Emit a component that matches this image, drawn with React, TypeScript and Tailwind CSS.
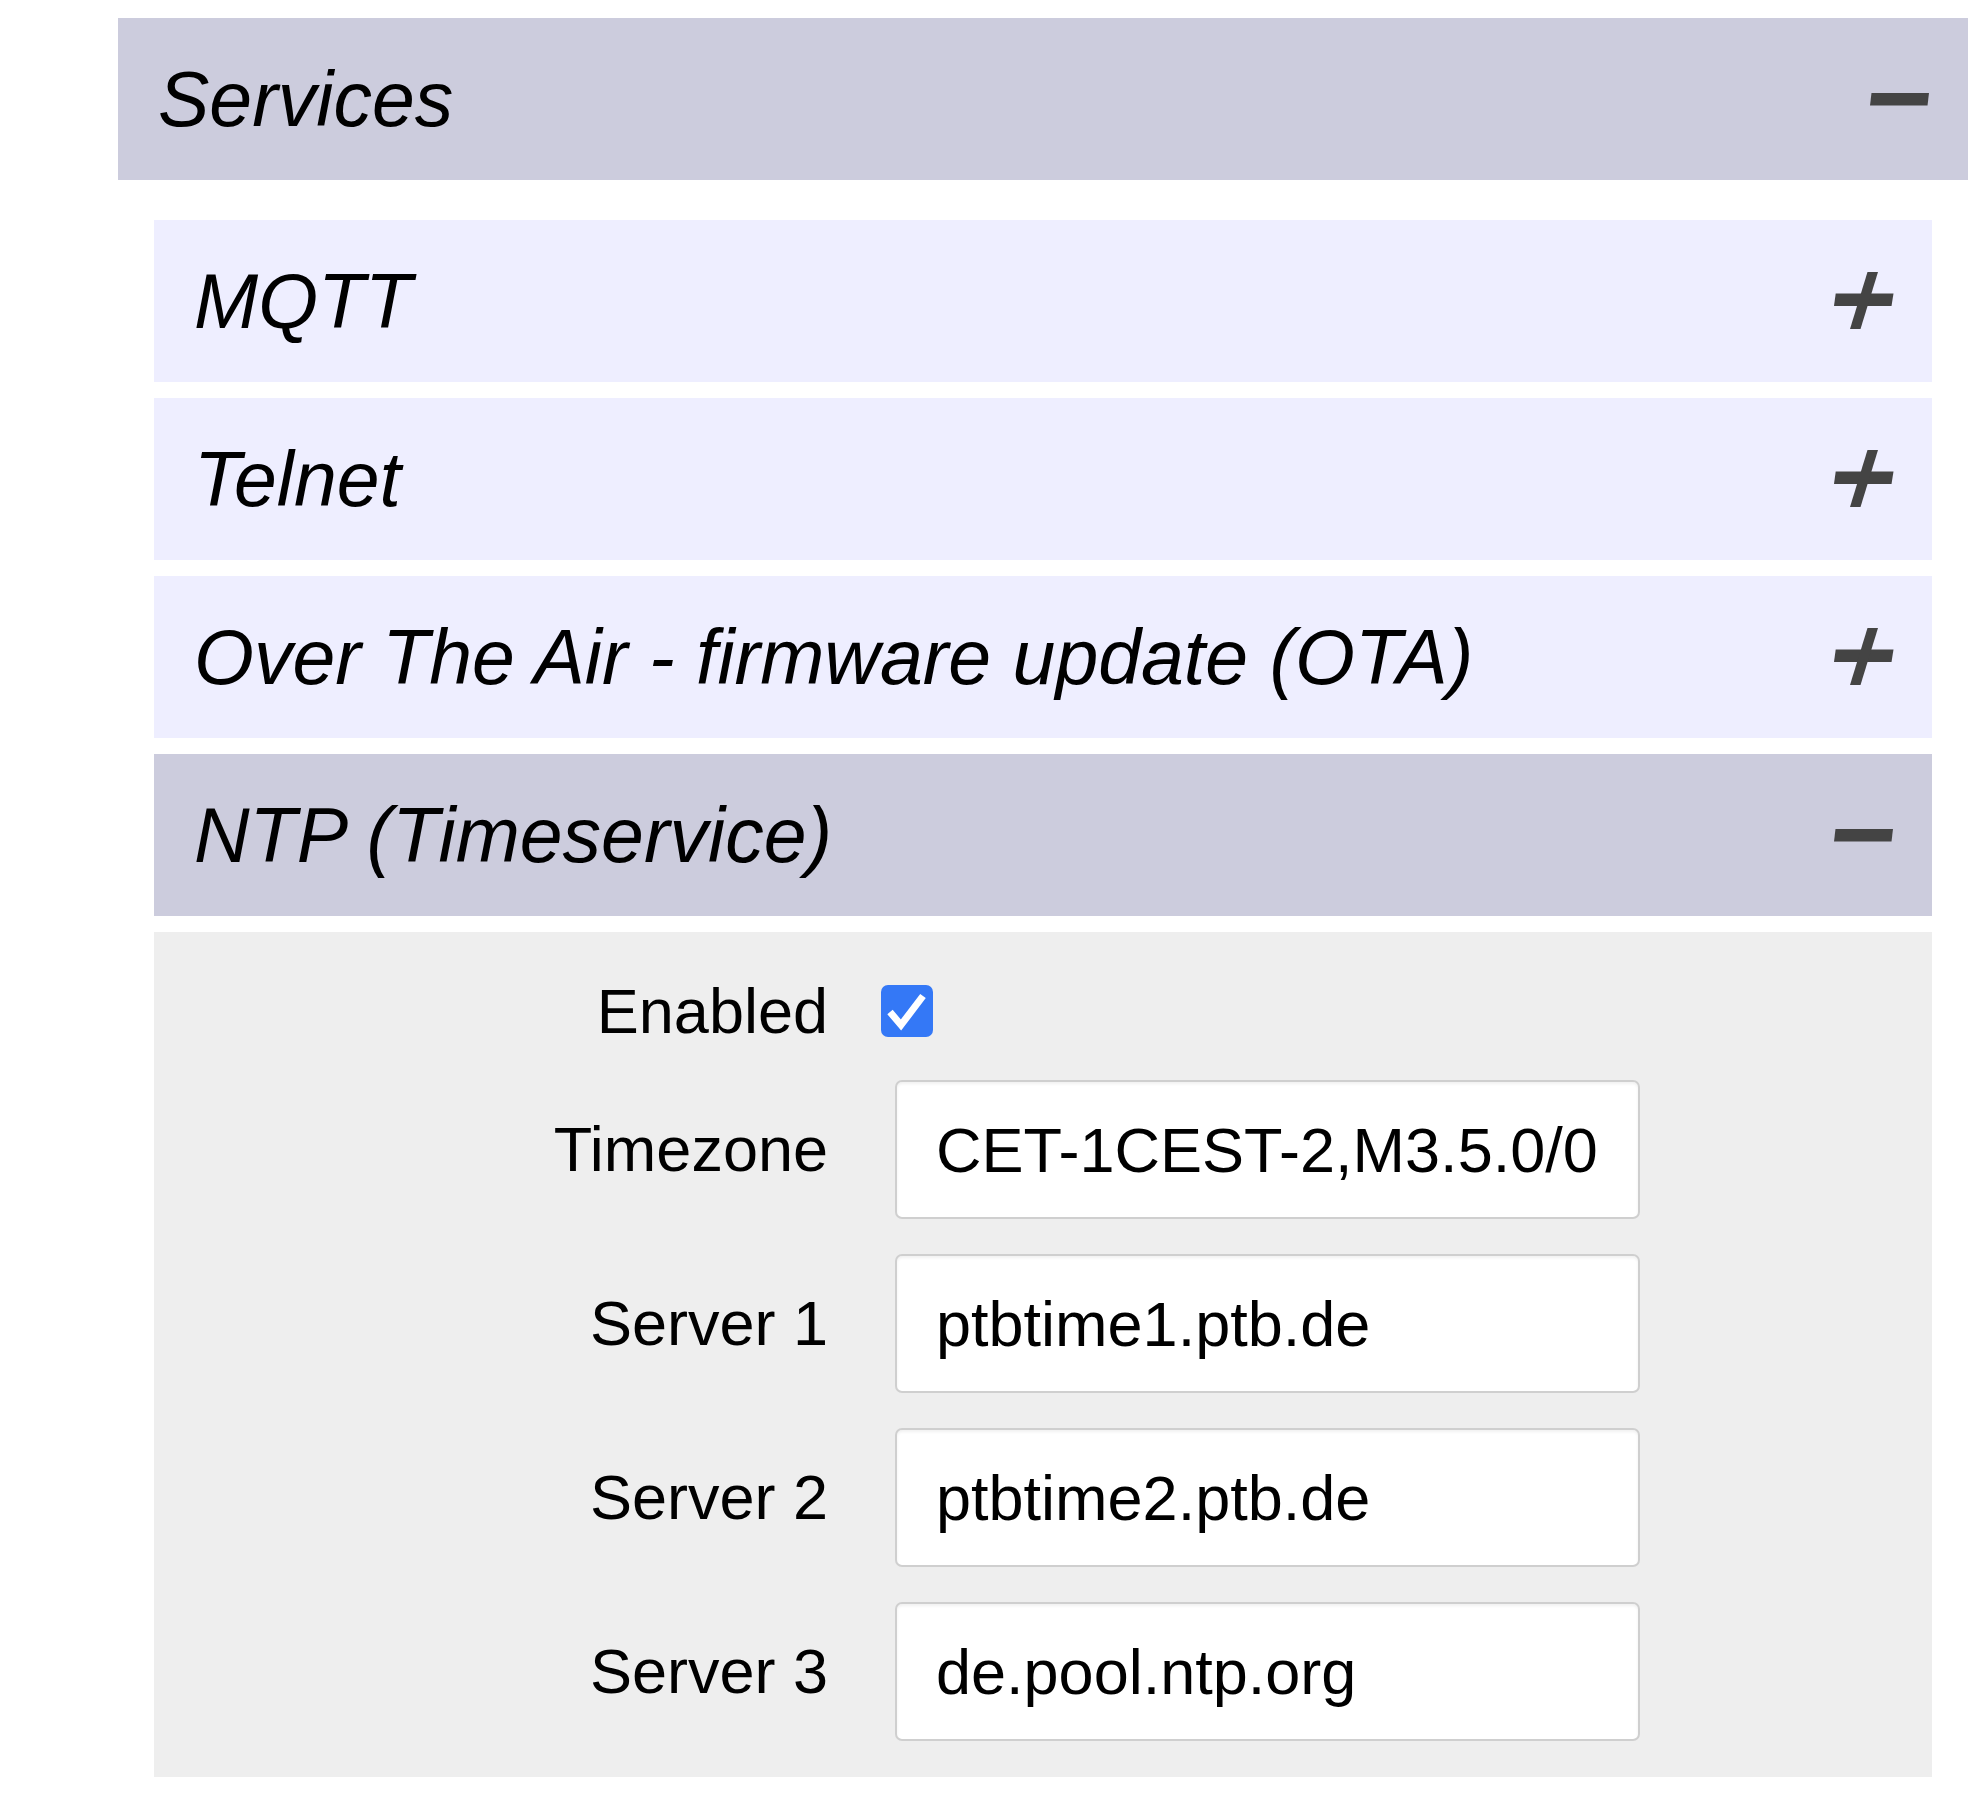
import React from 'react';

const font = { fontFamily: '"Liberation Sans", Arial, Helvetica, sans-serif' };

function PlusIcon() {
  return (
    <svg width="60" height="58" viewBox="0 0 60 58" className="shrink-0">
      <polygon points="1.7,21.5 59.5,21.5 57.5,34 0,34" fill="#444" />
      <polygon points="33.5,0 44,0 26.5,57 16,57" fill="#444" />
    </svg>
  );
}

function MinusIcon() {
  return (
    <svg width="60" height="13" viewBox="0 0 60 13" className="shrink-0">
      <polygon points="1.5,0 59,0 57.5,12.5 0,12.5" fill="#444" />
    </svg>
  );
}

function SectionHeader({ title, open }: { title: string; open: boolean }) {
  return (
    <div
      className={`h-[162px] flex items-center justify-between pl-[40px] pr-[38px] ${
        open ? 'bg-[#ccccdd]' : 'bg-[#eeeeff]'
      }`}
    >
      <span className="text-[77px] italic text-black leading-none" style={font}>
        {title}
      </span>
      {open ? <MinusIcon /> : <PlusIcon />}
    </div>
  );
}

function Field({ label, value, first }: { label: string; value: string; first?: boolean }) {
  return (
    <div className={`flex items-center h-[139px] ${first ? 'mt-[29px]' : 'mt-[35px]'}`}>
      <label className="w-[674px] text-right text-[63px] text-black leading-none" style={font}>
        {label}
      </label>
      <input
        readOnly
        value={value}
        className="ml-[67px] w-[745px] h-[139px] bg-white border-2 border-[#cfcfcf] rounded-[7px] pl-[39px] pr-[20px] text-[63px] text-black outline-none shadow-[inset_0_2px_3px_rgba(0,0,0,0.06)]"
        style={font}
      />
    </div>
  );
}

export default function App() {
  return (
    <div className="min-h-[1814px] bg-white pl-[118px] pt-[18px]" style={font}>
      <SectionHeader title="Services" open />

      <div className="px-[36px] pt-[40px] flex flex-col gap-[16px]">
        <SectionHeader title="MQTT" open={false} />
        <SectionHeader title="Telnet" open={false} />
        <SectionHeader title="Over The Air - firmware update (OTA)" open={false} />
        <SectionHeader title="NTP (Timeservice)" open />

        {/* NTP settings body */}
        <div className="bg-[#eeeeee] pt-[39px] pb-[36px] flex flex-col">
          <div className="flex items-center h-[80px]">
            <span className="w-[674px] text-right text-[63px] text-black leading-none" style={font}>
              Enabled
            </span>
            <div className="ml-[53px] w-[52px] h-[52px] rounded-[7px] bg-[#3478f6] flex items-center justify-center">
              <svg width="52" height="52" viewBox="0 0 52 52">
                <polyline
                  points="9,27 20,40 42,11"
                  fill="none"
                  stroke="white"
                  strokeWidth="7"
                  strokeLinejoin="miter"
                />
              </svg>
            </div>
          </div>
          <Field label="Timezone" value="CET-1CEST-2,M3.5.0/0" first />
          <Field label="Server 1" value="ptbtime1.ptb.de" />
          <Field label="Server 2" value="ptbtime2.ptb.de" />
          <Field label="Server 3" value="de.pool.ntp.org" />
        </div>
      </div>
    </div>
  );
}
